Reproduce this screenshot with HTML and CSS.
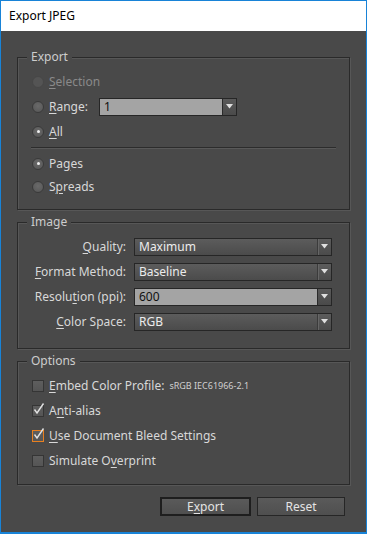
FILE: index.html
```html
<!DOCTYPE html>
<html>
<head>
<meta charset="utf-8">
<link rel="stylesheet" href="styles.css">
</head>
<body>
<div class="window">
  <div class="titlebar">Export JPEG</div>
  <div class="content">
    <div class="group g-export">
      <div class="legend">Export</div>
      <div class="rows">
        <div class="row disabled"><span class="radio"></span><span><u>S</u>election</span></div>
        <div class="row"><span class="radio"></span><span class="range-label"><u>R</u>ange:</span>
          <div class="combo edit range"><span class="field">1</span><span class="arrow"><svg width="7" height="5" viewBox="0 0 7 5"><polygon points="0,0 7,0 3.5,4.5" fill="#e0e0e0"/></svg></span></div>
        </div>
        <div class="row"><span class="radio on"></span><span><u>A</u>ll</span></div>
      </div>
      <div class="sep"></div>
      <div class="rows tight">
        <div class="row"><span class="radio on"></span><span>Pa<u>g</u>es</span></div>
        <div class="row"><span class="radio"></span><span>S<u>p</u>reads</span></div>
      </div>
    </div>

    <div class="group g-image">
      <div class="legend">Image</div>
      <div class="rows">
        <div class="row"><span class="label"><u>Q</u>uality:</span>
          <div class="combo select"><span class="field">Maximum</span><span class="arrow"><svg width="7" height="5" viewBox="0 0 7 5"><polygon points="0,0 7,0 3.5,4.5" fill="#e0e0e0"/></svg></span></div>
        </div>
        <div class="row"><span class="label"><u>F</u>ormat Method:</span>
          <div class="combo select"><span class="field">Baseline</span><span class="arrow"><svg width="7" height="5" viewBox="0 0 7 5"><polygon points="0,0 7,0 3.5,4.5" fill="#e0e0e0"/></svg></span></div>
        </div>
        <div class="row"><span class="label">Resolu<u>t</u>ion (ppi):</span>
          <div class="combo edit"><span class="field">600</span><span class="arrow"><svg width="7" height="5" viewBox="0 0 7 5"><polygon points="0,0 7,0 3.5,4.5" fill="#e0e0e0"/></svg></span></div>
        </div>
        <div class="row"><span class="label"><u>C</u>olor Space:</span>
          <div class="combo select"><span class="field">RGB</span><span class="arrow"><svg width="7" height="5" viewBox="0 0 7 5"><polygon points="0,0 7,0 3.5,4.5" fill="#e0e0e0"/></svg></span></div>
        </div>
      </div>
    </div>

    <div class="group g-options">
      <div class="legend">Options</div>
      <div class="rows">
        <div class="row"><span class="check"></span><span><u>E</u>mbed Color Profile:</span><span class="profile">sRGB IEC61966-2.1</span></div>
        <div class="row"><span class="check"><svg width="14" height="14" viewBox="0 0 14 14"><polyline points="2.5,6.5 5,10 11.5,0.5" fill="none" stroke="#e2e2e2" stroke-width="1.4"/></svg></span><span>A<u>n</u>ti-alias</span></div>
        <div class="row"><span class="check focus"><svg width="14" height="14" viewBox="0 0 14 14"><polyline points="2.5,6.5 5,10 11.5,0.5" fill="none" stroke="#e2e2e2" stroke-width="1.4"/></svg></span><span><u>U</u>se Document Bleed Settings</span></div>
        <div class="row"><span class="check"></span><span>Simulate O<u>v</u>erprint</span></div>
      </div>
    </div>

    <div class="buttons">
      <button class="btn default">E<u>x</u>port</button>
      <button class="btn reset">Reset</button>
    </div>
  </div>
</div>
</body>
</html>
```

FILE: styles.css
```css
html, body {
  margin: 0;
  padding: 0;
  background: #ffffff;
}
body {
  font-family: "Noto Sans", "Open Sans", sans-serif;
  font-size: 12px;
}
.window {
  width: 367px;
  height: 534px;
  box-sizing: border-box;
  border: 1px solid #1883d7;
  border-bottom-width: 2px;
  background: #494949;
  display: flex;
  flex-direction: column;
}
.titlebar {
  height: 30px;
  background: #ffffff;
  color: #000000;
  padding-left: 8px;
  display: flex;
  align-items: center;
  line-height: 16px;
}
.content {
  flex: 1;
  padding: 0 16px;
  color: #d8d8d8;
}
u {
  text-decoration: underline;
  text-underline-offset: 2px;
  text-decoration-thickness: 1px;
}
.group {
  border: 1px solid #2a2a2a;
  box-shadow: inset 1px 1px 0 #575757, 1px 1px 0 #575757;
  margin-top: 12px;
}
.g-export { margin-top: 26px; padding-bottom: 11px; }
.g-image { padding-bottom: 14px; }
.g-options { padding-bottom: 11px; }
.legend {
  margin: -9px 0 0 9px;
  padding: 0 4px;
  width: max-content;
  background: #494949;
  line-height: 16px;
  color: #cdcdcd;
}
.rows { padding-top: 4px; }
.rows.tight { padding-top: 0; }
.row {
  height: 25px;
  display: flex;
  align-items: center;
  padding-left: 14px;
  line-height: 16px;
  white-space: nowrap;
}
.rows.tight .row { height: 23px; }
.row.disabled { color: #8a8a8a; }
.radio {
  width: 12px;
  height: 12px;
  box-sizing: border-box;
  border-radius: 50%;
  border: 1px solid #3a3a3a;
  background: radial-gradient(circle at 50% 40%, #6a6a6a, #555555);
  margin-right: 5px;
  flex: none;
  display: flex;
  align-items: center;
  justify-content: center;
}
.row.disabled .radio {
  border-color: #474747;
  background: #545454;
}
.radio.on::after {
  content: "";
  width: 3px;
  height: 3px;
  border-radius: 50%;
  background: #f0f0f0;
}
.range-label { width: 50px; }
.combo {
  height: 18px;
  box-sizing: border-box;
  border: 1px solid #262626;
  display: flex;
  color: #ececec;
}
.combo .field {
  flex: 1;
  padding-left: 4px;
  display: flex;
  align-items: center;
}
.combo .arrow {
  width: 13px;
  display: flex;
  align-items: center;
  justify-content: center;
}
.combo.select {
  background: linear-gradient(#5c5c5c, #4b4b4b);
}
.combo.select .arrow {
  border-left: 1px solid #3b3b3b;
  box-shadow: inset 1px 0 0 #666666;
}
.combo.edit .field {
  background: #a4a4a4;
  color: #111111;
}
.combo.edit .arrow {
  border-left: 1px solid #2a2a2a;
  background: linear-gradient(#5a5a5a, #4a4a4a);
}
.range { width: 138px; }
.g-image .row { padding-left: 0; }
.label {
  width: 108px;
  text-align: right;
  margin-right: 8px;
}
.g-image .combo { width: 198px; }
.sep {
  margin: 3px 13px;
  border-top: 1px solid #2c2c2c;
  border-bottom: 1px solid #595959;
}
.check {
  width: 12px;
  height: 12px;
  box-sizing: border-box;
  border: 1px solid #353535;
  background: linear-gradient(#5e5e5e, #555555);
  margin-right: 5px;
  flex: none;
  position: relative;
}
.check svg {
  position: absolute;
  left: -1px;
  top: -3px;
}
.check.focus {
  border-color: #e8801f;
}
.profile {
  font-size: 9px;
  margin-left: 5px;
  color: #d0d0d0;
}
.buttons {
  margin-top: 12px;
  display: flex;
  justify-content: flex-end;
  gap: 6px;
  padding-right: 5px;
}
.btn {
  height: 19px;
  box-sizing: border-box;
  background: linear-gradient(#5a5a5a, #4f4f4f);
  color: #e4e4e4;
  font-family: inherit;
  font-size: 12px;
  padding: 0;
  line-height: 15px;
  border-radius: 0;
}
.btn.default {
  width: 91px;
  border: 2px solid #1e1e1e;
}
.btn.reset {
  width: 88px;
  border: 1px solid #262626;
}
```
